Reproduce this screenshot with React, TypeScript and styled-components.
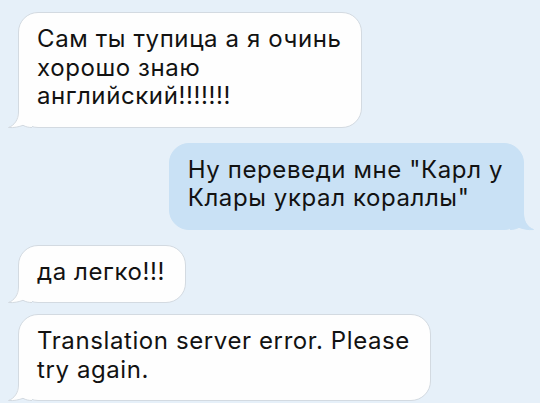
import * as React from 'react'
import styled, { createGlobalStyle } from 'styled-components'

const GlobalStyle = createGlobalStyle`
    html, body {
        margin: 0;
        padding: 0;
        background: #e6f0f9;
    }
    * {
        box-sizing: border-box;
    }
`

type Message = {
    out?: boolean
    // follows another message from the same side
    cont?: boolean
    lines: string[]
}

const messages: Message[] = [
    { lines: ['Сам ты тупица а я очинь', 'хорошо знаю', 'английский!!!!!!!'] },
    { out: true, lines: ['Ну переведи мне "Карл у', 'Клары украл кораллы"'] },
    { lines: ['да легко!!!'] },
    { cont: true, lines: ['Translation server error. Please', 'try again.'] },
]

const Thread = styled.div`
    width: 540px;
    height: 403px;
    overflow: hidden;
    display: flex;
    flex-direction: column;
    padding: 12px 16px 0 18px;
    background: #e6f0f9;
`

const Row = styled.div<{ $out?: boolean; $cont?: boolean }>`
    display: flex;
    justify-content: ${p => (p.$out ? 'flex-end' : 'flex-start')};
    margin-top: ${p => (p.$cont ? '11px' : '15px')};

    &:first-child {
        margin-top: 0;
    }
`

const Bubble = styled.div<{ $out?: boolean }>`
    position: relative;
    padding: 12px 20px 16px 18px;
    border-radius: 20px;
    border: 1px solid ${p => (p.$out ? '#c9e1f5' : '#d3dae1')};
    background: ${p => (p.$out ? '#c9e1f5' : '#fefefe')};
    color: #121212;
    font-family: Inter, "Liberation Sans", Arial, sans-serif;
    font-size: 24px;
    line-height: 28.5px;
    letter-spacing: 0.6px;
    white-space: nowrap;
`

const TailSvg = styled.svg<{ $out?: boolean }>`
    position: absolute;
    bottom: -1px;
    ${p => (p.$out ? 'right: -11px; transform: scaleX(-1);' : 'left: -11px;')}
    overflow: visible;
`

// little curled tail at the bottom corner of a bubble
const Tail: React.FC<{ out?: boolean }> = ({ out }) => {
    const fill = out ? '#c9e1f5' : '#fefefe'
    const stroke = out ? '#c9e1f5' : '#d3dae1'
    const edge = 'C10.5 12 6 17.5 0.5 19.5 C6 20 11 18.8 15 17.3 C18 19 21 19.5 24 19.5'
    return (
        <TailSvg $out={out} width={24} height={20} viewBox="0 0 24 20">
            <path d={`M10 0 L10 4 C10 12 6 17.5 0.5 19.5 C6 20 11 18.8 15 17.3 C18 19 21 19.5 24 19.5 L24 0 Z`} fill={fill} />
            <path d={`M10.5 0 L10.5 4 ${edge}`} fill="none" stroke={stroke} strokeWidth={1} />
        </TailSvg>
    )
}

export default function App() {
    return (
        <>
            <GlobalStyle />
            <Thread>
                {messages.map((m, i) => (
                    <Row key={i} $out={m.out} $cont={m.cont}>
                        <Bubble $out={m.out}>
                            {m.lines.map((line, j) => (
                                <React.Fragment key={j}>
                                    {j > 0 && <br />}
                                    {line}
                                </React.Fragment>
                            ))}
                            <Tail out={m.out} />
                        </Bubble>
                    </Row>
                ))}
            </Thread>
        </>
    )
}
